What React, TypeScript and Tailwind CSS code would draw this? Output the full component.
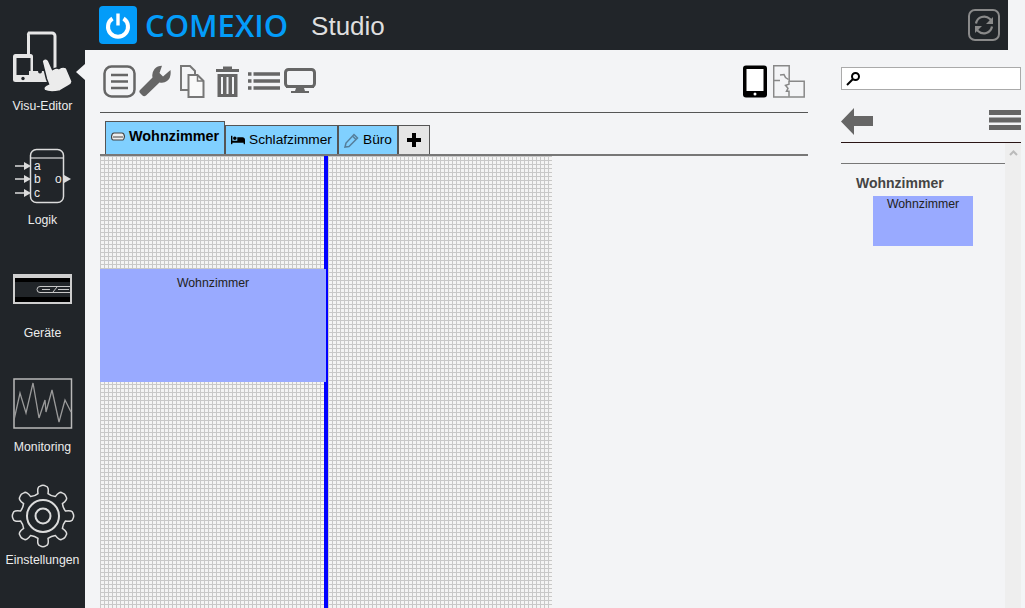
import { FaBed } from 'react-icons/fa';

const sans = "font-['Liberation_Sans',Arial,sans-serif]";

function gearPath(cx: number, cy: number, outer: number, inner: number, teeth: number) {
    const parts: string[] = [];
    const step = (Math.PI * 2) / teeth;
    const pt = (r: number, a: number) => `${(cx + r * Math.cos(a)).toFixed(2)} ${(cy + r * Math.sin(a)).toFixed(2)}`;
    for (let i = 0; i < teeth; i++) {
        const a = i * step - Math.PI / 2;
        parts.push(`${i === 0 ? 'M' : 'L'}${pt(inner, a - step * 0.28)}`);
        parts.push(`Q${pt(outer, a - step * 0.26)} ${pt(outer, a - step * 0.12)}`);
        parts.push(`Q${pt(outer + 1.5, a)} ${pt(outer, a + step * 0.12)}`);
        parts.push(`Q${pt(outer, a + step * 0.26)} ${pt(inner, a + step * 0.28)}`);
        parts.push(`Q${pt(inner - 1.5, a + step * 0.5)} ${pt(inner, a + step * 0.72)}`);
    }
    return parts.join(' ') + 'Z';
}

function VisuIcon() {
    return (
        <svg width="62" height="62" viewBox="12 31 62 62">
            <path d="M29 33h23a3 3 0 0 1 3 3v38h-26.500v-38a3 3 0 0 1 .5-3z" fill="none" stroke="#e6e6e6" strokeWidth="3" />
            <rect x="13" y="54" width="20" height="28" rx="2.500" fill="#e6e6e6" />
            <rect x="16.500" y="58" width="14" height="17" fill="#212529" />
            <circle cx="23" cy="78.500" r="1.700" fill="#212529" />
            <rect x="29" y="71" width="20" height="11" fill="#e6e6e6" />
            <circle cx="40" cy="71.500" r="2" fill="#212529" />
            <path d="M42 61q3-4 6.500-.500l4 9q4-2.500 6.500-1 4-3 7.500-.500l5.500 13q.5 3-3.500 5l-8.500 5q-10 2-15.500-.500-2.500-4 4-6.500l-2-5z" fill="#ececec" stroke="#212529" strokeWidth="1.500" />
        </svg>
    );
}

function LogikIcon() {
    const ys = [166, 179, 193];
    return (
        <svg width="62" height="56" viewBox="12 148 62 56">
            <rect x="30.500" y="149.500" width="33" height="53" rx="6" fill="none" stroke="#dcdcdc" strokeWidth="1.500" />
            <path d="M31 158h32" stroke="#dcdcdc" strokeWidth="1.200" />
            {ys.map((y) => (
                <g key={y}>
                    <path d={`M15 ${y}h10`} stroke="#dcdcdc" strokeWidth="1.500" />
                    <path d={`M24 ${y - 4}l7 4-7 4z`} fill="#dcdcdc" />
                </g>
            ))}
            <path d="M64 175l7 4-7 4z" fill="#dcdcdc" />
            <g fontFamily="Liberation Sans, Arial, sans-serif" fontSize="12" fill="#ececec">
                <text x="34" y="170">a</text>
                <text x="34" y="183">b</text>
                <text x="34" y="197">c</text>
                <text x="55" y="183">o</text>
            </g>
        </svg>
    );
}

function GeraeteIcon() {
    return (
        <svg width="60" height="32" viewBox="13 273 60 32">
            <rect x="13" y="274" width="59" height="30" fill="#cfcfcf" />
            <rect x="15" y="278" width="55" height="24" fill="#212529" />
            <rect x="15" y="278" width="55" height="4" fill="#000" />
            <rect x="15" y="297" width="55" height="5" fill="#000" />
            <path d="M70 286.500h-30a2.500 2.500 0 0 0 0 6h30" fill="none" stroke="#c8c8c8" strokeWidth="1" />
            <path d="M42 289.500h8M53 292l4-5M58 289.500h11" stroke="#c8c8c8" strokeWidth="1" />
        </svg>
    );
}

function MonitoringIcon() {
    return (
        <svg width="60" height="51" viewBox="13 378 60 51">
            <rect x="14" y="379" width="57.500" height="49" fill="none" stroke="#b9b9b9" strokeWidth="1.500" />
            <polyline points="14,420 20,393 26,413 33,383 39,418 45,400 46,412 52,390 59,422 65,400 71,412" fill="none" stroke="#9a9a9a" strokeWidth="1.300" />
        </svg>
    );
}

function GearIcon() {
    return (
        <svg width="64" height="64" viewBox="10 484 64 64">
            <path d={gearPath(42, 516, 30, 23, 8)} fill="none" stroke="#dcdcdc" strokeWidth="1.500" />
            <circle cx="42" cy="516" r="16" fill="none" stroke="#dcdcdc" strokeWidth="2" />
            <circle cx="42" cy="516" r="7.500" fill="none" stroke="#dcdcdc" strokeWidth="2" />
        </svg>
    );
}

function NavItem({ label, children, gap, height }: { label: string; children: React.ReactNode; gap: string; height: string }) {
    return (
        <div className={`${height} flex flex-col items-center justify-end pb-[1px]`}>
            <div className={`flex justify-center ${gap}`}>{children}</div>
            <span className={`text-[12.3px] leading-[14px] text-[#ececec] ${sans}`}>{label}</span>
        </div>
    );
}

function ToolIcons() {
    return (
        <div className="flex items-center h-8">
            <svg width="33" height="33" viewBox="0 0 33 33">
                <rect x="1.500" y="1.500" width="30" height="30" rx="7" fill="none" stroke="#666" strokeWidth="2.500" />
                <path d="M8 10h17M8 16.500h17M8 23h17" stroke="#666" strokeWidth="2.500" />
            </svg>
            <svg className="ml-[3px]" width="32" height="32" viewBox="0 0 32 32">
                <path d="M23 .7L20.500 8l3.500 3.500L31.500 5q1 8-3.500 11-3 2.500-7.500 1.500L7 30.500q-2 1.500-3.500 0L1 28q-1.300-1.500 0-3l12.500-12.500Q12.500 8 15.500 4 18.500.7 23 .7z" fill="#666" />
            </svg>
            <svg className="ml-[9px]" width="25" height="33" viewBox="0 0 25 33">
                <path d="M1 1h9l5 5v6h-6v13H1z" fill="#f3f4f6" stroke="#777" strokeWidth="2" />
                <path d="M8.500 10h9l6 6v16H8.500z" fill="#f9f9f9" stroke="#777" strokeWidth="2" />
                <path d="M17.500 10v6h6" fill="none" stroke="#777" strokeWidth="1.500" />
            </svg>
            <svg className="ml-[11px]" width="23" height="33" viewBox="0 0 23 33">
                <path d="M0 4h7V1.500h9V4h7v3H0z" fill="#666" />
                <path d="M1.500 9h20v23h-20z" fill="#666" />
                <path d="M6 12v17M11.500 12v17M17 12v17" stroke="#f3f4f6" strokeWidth="2" />
            </svg>
            <svg className="ml-[9px]" width="32" height="20" viewBox="0 0 32 20">
                <path d="M0 3h3.500M0 10h3.500M0 17h3.500" stroke="#666" strokeWidth="3.500" />
                <path d="M5.500 3H32M5.500 10H32M5.500 17H32" stroke="#666" strokeWidth="3.500" />
            </svg>
            <svg className="ml-[4px]" width="33" height="26" viewBox="0 0 33 26">
                <rect x="1.500" y="1.500" width="29" height="17" rx="3" fill="none" stroke="#666" strokeWidth="3" />
                <path d="M12 20h8l1 3h4v2H7v-2h4z" fill="#666" />
                <path d="M2 18h28v2H2z" fill="#666" />
            </svg>
        </div>
    );
}

function DeviceIcons() {
    return (
        <div className="flex items-start gap-[6px] h-8">
            <svg width="24" height="33" viewBox="0 0 24 33">
                <rect width="24" height="32" y="0.500" rx="3" fill="#000" />
                <rect x="3.500" y="4" width="17" height="22" fill="#fff" />
                <circle cx="12" cy="29" r="1.500" fill="#fff" />
            </svg>
            <svg width="32" height="33" viewBox="0 0 32 33" fill="none" stroke="#888" strokeWidth="1.500">
                <path d="M.7.7h15.500v15.600h15v15.800H.7z" />
                <path d="M1 15.500h6M16 16.300v3l-3.500 1 2.500 3-1.500 3h2.500v5.500M7 10l4-.500 1.500 3 3 2" />
            </svg>
        </div>
    );
}

function Tab({ label, icon, active, width }: { label: string; icon: React.ReactNode; active?: boolean; width: string }) {
    return (
        <div
            className={`flex items-center border border-[#555] border-b-0 bg-[#80d0ff] text-black ${sans} ${width} ${
                active ? 'h-[33px] pl-[5px] pb-[3px] gap-[4px] text-[14.4px] font-bold' : 'h-[29px] pl-[5px] gap-[4px] text-[13.7px]'
            }`}
        >
            {icon}
            <span className="whitespace-nowrap">{label}</span>
        </div>
    );
}

export default function App() {
    return (
        <div className={`flex w-[1025px] h-[608px] overflow-hidden bg-[#f3f4f6] ${sans}`}>
            <aside className="w-[85px] h-full bg-[#212529] relative shrink-0">
                <NavItem label="Visu-Editor" gap="mb-[5.5px]" height="h-[113.5px]"><VisuIcon /></NavItem>
                <NavItem label="Logik" gap="mb-[9px]" height="h-[114.5px]"><LogikIcon /></NavItem>
                <NavItem label="Geräte" gap="mb-[21px]" height="h-[113px]"><GeraeteIcon /></NavItem>
                <NavItem label="Monitoring" gap="mb-[11px]" height="h-[114px]"><MonitoringIcon /></NavItem>
                <NavItem label="Einstellungen" gap="mb-[5px]" height="h-[113px]"><GearIcon /></NavItem>
                <div className="absolute left-[76px] top-[64px] w-0 h-0 border-y-[8px] border-y-transparent border-r-[9px] border-r-[#f3f4f6]" />
            </aside>

            <div className="flex-1 flex flex-col min-w-0">
                <header className="w-[923px] h-[50px] shrink-0 bg-[#212529] flex items-center pl-[14px] pr-[8px]">
                    <div className="w-[38px] h-[38px] rounded-[4px] bg-[#039cf9] flex items-center justify-center">
                        <svg width="28" height="28" viewBox="0 0 28 28" fill="none" stroke="#fff" strokeWidth="4">
                            <path d="M8.500 7.500a10 10 0 1 0 11 0" />
                            <path d="M14 2.500v12" strokeWidth="3.400" />
                        </svg>
                    </div>
                    <span className="ml-[8px] text-[#039cf9] text-[31px] font-semibold leading-none font-['Open_Sans',sans-serif]">COMEXIO</span>
                    <span className={`ml-[23px] mt-[2px] text-[#dedede] text-[26px] leading-none ${sans}`}>Studio</span>
                    <svg className="ml-auto" width="32" height="32" viewBox="0 0 32 32" fill="none" stroke="#8a8a8a">
                        <rect x="1" y="1" width="30" height="30" rx="6" strokeWidth="2" />
                        <path d="M8 14.500a8.300 8.300 0 0 1 14-4.500l2 2.500" strokeWidth="2.200" />
                        <path d="M25 8v7h-7z" fill="#8a8a8a" stroke="none" />
                        <path d="M24 17.500a8.300 8.300 0 0 1-14 4.500l-2-2.500" strokeWidth="2.200" />
                        <path d="M7 24v-7h7z" fill="#8a8a8a" stroke="none" />
                    </svg>
                </header>

                <div className="flex-1 flex min-h-0">
                    <section className="w-[708px] ml-[15px] flex flex-col min-h-0">
                        <div className="h-[63px] shrink-0 border-b border-[#555] flex justify-between pl-[3px] pr-[3px] pt-[15px]">
                            <ToolIcons />
                            <DeviceIcons />
                        </div>
                        <div className="h-[43px] shrink-0 flex items-end pl-[5px] border-b-2 border-[#777]">
                            <Tab active width="w-[120px]" label="Wohnzimmer" icon={
                                <svg width="14" height="10" viewBox="0 0 14 10"><path d="M3 1h8q2 0 2.500 3.500-.5 3-1.500 3.500H2Q.5 7.500.5 4.500 1 1 3 1z" fill="#eee" stroke="#444" strokeWidth="1.200" /><path d="M2 5h10" stroke="#444" strokeWidth="1" /></svg>
                            } />
                            <Tab width="w-[113px]" label="Schlafzimmer" icon={<FaBed className="w-[14px] h-[14px] text-black" />} />
                            <Tab width="w-[60px]" label="Büro" icon={
                                <svg width="15" height="15" viewBox="0 0 15 15" fill="none" stroke="#557f9c" strokeWidth="1.500"><path d="M1 14l1-4 8-8.500 3.500 3.500L5 13.500zM8.500 3l3.500 3.500" /></svg>
                            } />
                            <div className="h-[29px] w-[32px] border border-[#555] border-b-0 bg-[#e5e5e5] flex items-center justify-center">
                                <svg width="14" height="14" viewBox="0 0 14 14"><path d="M5 0h4v5h5v4H9v5H5V9H0V5h5z" fill="#000" /></svg>
                            </div>
                        </div>
                        <div className="relative flex-1 w-[452px] bg-[#f4f4f4] bg-[linear-gradient(#c8c8c8_1px,transparent_1px),linear-gradient(90deg,#c8c8c8_1px,transparent_1px)] bg-[size:4px_4px]">
                            <div className="absolute left-[224px] top-0 bottom-0 w-[4px] bg-[#0000ff]" />
                            <div className="absolute left-0 top-[113px] w-[226px] h-[113px] bg-[#99aaff] text-center text-[12.3px] leading-[14px] pt-[7px] text-[#222]">
                                Wohnzimmer
                            </div>
                        </div>
                    </section>

                    <aside className="w-[180px] ml-[33px] flex flex-col min-h-0">
                        <div className="mt-[17px] h-[23px] shrink-0 bg-white border border-[#aaa] flex items-center pl-[4px]">
                            <svg width="15" height="15" viewBox="0 0 15 15" fill="none" stroke="#000"><circle cx="9.500" cy="5.500" r="3.500" strokeWidth="2" /><path d="M7 8l-6 6" strokeWidth="2" /></svg>
                        </div>
                        <div className="mt-[18px] h-[35px] shrink-0 flex justify-between border-b border-[#2a1515]">
                            <svg width="32" height="27" viewBox="0 0 32 27"><path d="M13 0v8h19v10H13v9L0 13.500z" fill="#666" /></svg>
                            <svg width="32" height="20" viewBox="0 0 32 20" className="mt-[2px]"><path d="M0 0h32v5H0zM0 7.500h32v5H0zM0 15h32v5H0z" fill="#666" /></svg>
                        </div>
                        <div className="flex flex-1 min-h-0">
                            <div className="w-[164px]">
                                <div className="mt-[20px] border-t border-[#777]" />
                                <div className="mt-[11px] pl-[15px] text-[14px] leading-[16px] font-bold text-[#444]">Wohnzimmer</div>
                                <div className="mt-[5px] ml-[32px] w-[100px] h-[50px] bg-[#99aaff] text-center text-[12.3px] leading-[14px] pt-[1px] text-[#222]">Wohnzimmer</div>
                            </div>
                            <div className="w-[16px] bg-[#eeeeee] flex justify-center pt-[7px]">
                                <svg width="9" height="6" viewBox="0 0 9 6" fill="none" stroke="#bbb" strokeWidth="2"><path d="M1 5l3.500-3.500L8 5" /></svg>
                            </div>
                        </div>
                    </aside>
                </div>
            </div>
        </div>
    );
}
